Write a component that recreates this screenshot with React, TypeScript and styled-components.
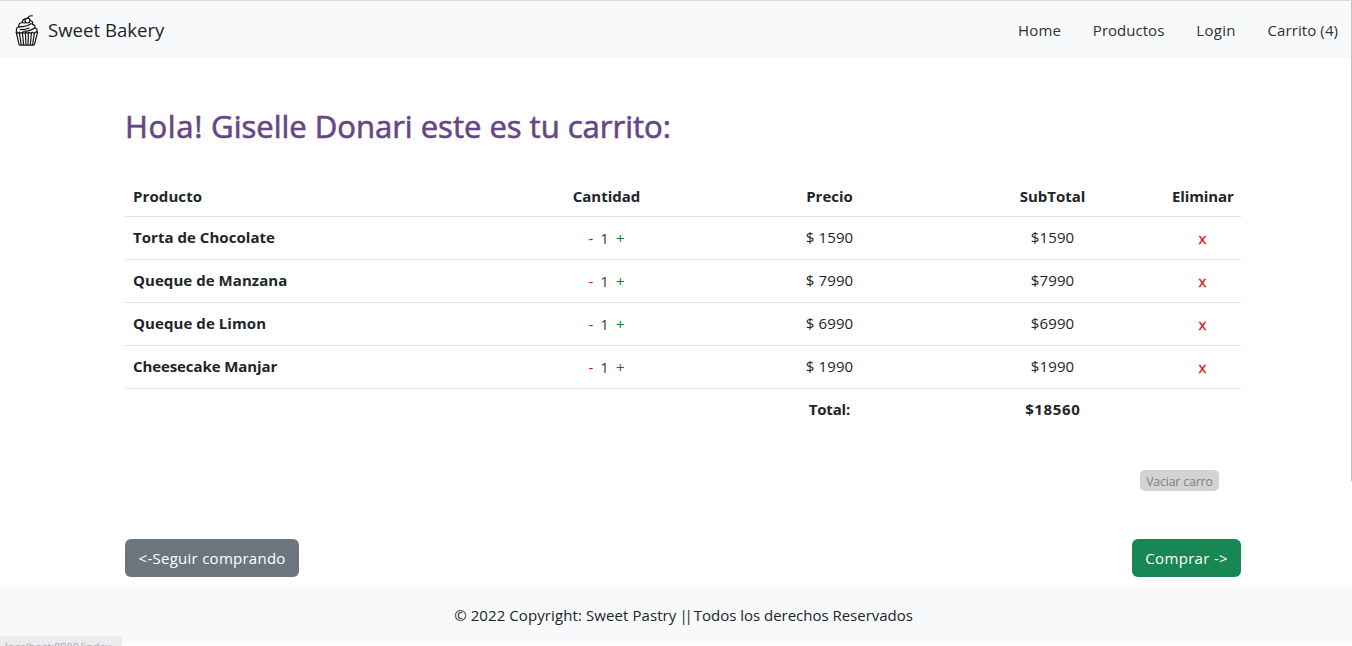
import React from 'react';
import styled, { createGlobalStyle } from 'styled-components';

const GlobalStyle = createGlobalStyle`
  *, *::before, *::after { box-sizing: border-box; }
  html, body { margin: 0; height: 100%; overflow: hidden; }
  body {
    background: #fff;
    color: #212529;
    font-family: 'Segoe UI', 'Open Sans', 'Noto Sans', sans-serif;
    font-size: 15px;
    line-height: 24px;
  }
`;

const Page = styled.div`
  position: relative;
  height: 646px;
  overflow: hidden;
  border-top: 1px solid #d9dadc;
`;

const Text = styled.span<{ $track?: number }>`
  display: inline-block;
  white-space: pre;
  letter-spacing: ${({ $track = 0 }) => $track}px;
  margin-right: ${({ $track = 0 }) => -$track}px;
`;

const Navbar = styled.nav`
  display: flex;
  align-items: center;
  justify-content: space-between;
  height: 57px;
  padding: 0 14px 0 15px;
  background: #f8f9fa;
`;

const Brand = styled.a`
  display: flex;
  align-items: center;
  gap: 9px;
  font-size: 18.6px;
  line-height: 30px;
`;

const NavLinks = styled.div`
  display: flex;
  gap: 32px;
`;

const NavLink = styled.a`
  color: #303235;
`;

const Container = styled.main`
  display: flex;
  flex-direction: column;
  width: 1116px;
  height: 529px;
  margin-left: 125px;
`;

const Heading = styled.h1`
  margin: 48px 0 0;
  font-size: 31.1px;
  font-weight: 500;
  line-height: 40px;
  color: #664783;
  -webkit-text-stroke: 0.6px #664783;
`;

const Table = styled.div`
  margin-top: 30px;
`;

const Row = styled.div<{ $height: number; $line?: boolean }>`
  display: grid;
  grid-template-columns: 370px 223px 223px 223px 77px;
  height: ${({ $height }) => $height}px;
  padding-top: 8px;
  border-bottom: ${({ $line }) => ($line ? '1px solid #dee2e6' : '0')};
`;

const Cell = styled.div<{ $bold?: boolean; $left?: boolean }>`
  padding: 0 8px;
  font-weight: ${({ $bold }) => ($bold ? 700 : 400)};
  text-align: ${({ $left }) => ($left ? 'left' : 'center')};
`;

const Quantity = styled.div`
  display: flex;
  justify-content: center;
  gap: 7px;
  padding-top: 1px;
  color: #3c4043;
`;

const Action = styled.span<{ $color: string }>`
  color: ${({ $color }) => $color};
`;

const Remove = styled.div`
  padding-top: 1px;
  text-align: center;
  color: #dc1014;
  -webkit-text-stroke: 0.3px #dc1014;
`;

const EmptyButton = styled.button`
  align-self: flex-end;
  width: 79px;
  height: 21px;
  margin: 40px 22px 0 0;
  padding: 2px 0 0;
  border: 0;
  border-radius: 5px;
  background: #d3d3d3;
  color: #808080;
  font: 12.3px/19px 'Segoe UI', 'Open Sans', sans-serif;
`;

const Actions = styled.div`
  display: flex;
  justify-content: space-between;
  margin-top: 48px;
`;

const Button = styled.button<{ $color: string; $width: number }>`
  width: ${({ $width }) => $width}px;
  height: 38px;
  padding: 0 0 1px;
  border: 0;
  border-radius: 6px;
  background: ${({ $color }) => $color};
  color: #fff;
  font: inherit;
`;

const Footer = styled.footer`
  display: flex;
  justify-content: center;
  height: 56px;
  padding: 16px 0 0 15px;
  background: #f8f9fb;
`;

const Separator = styled.span`
  margin: 0 1px 0 3px;
  letter-spacing: -3px;
  padding-right: 3px;
`;

const StatusBubble = styled.div`
  position: absolute;
  left: 0;
  bottom: -10px;
  width: 122px;
  height: 20px;
  padding-left: 5px;
  overflow: hidden;
  border-radius: 0 4px 0 0;
  background: #ebecee;
  color: #a9abae;
  font-size: 11px;
  line-height: 22px;
`;

const WindowEdge = styled.div`
  position: absolute;
  top: 0;
  right: 0;
  width: 1px;
  height: 480px;
  background: #c4c4c4;
`;

const CupcakeIcon = styled.svg`
  width: 24px;
  height: 31px;
  margin-top: 2px;
`;

const Cupcake = () => (
  <CupcakeIcon viewBox="0 0 24 32" preserveAspectRatio="none" fill="none" stroke="#111" strokeWidth="1.15" strokeLinecap="round" strokeLinejoin="round">
    <path d="M1.2 17.7 4 30.2Q4.2 31.1 5.2 31.1H18.3Q19.3 31.1 19.5 30.2L22.6 17.7" />
    <path d="M1.2 17.7 2.8 19 4.4 17.6 6 19 7.6 17.6 9.2 19 10.8 17.6 12.4 19 14 17.6 15.6 19 17.2 17.6 18.8 19 20.7 17.6 22.6 17.7" />
    <path d="M4.4 18.5 6.2 30.5M7.4 18.5 8.6 30.5M10.5 18.5 10.9 30.5M13.4 18.5 13 30.5M16.4 18.5 15.4 30.5M19.4 18.5 17.6 30.5" />
    <path d="M2 17.3C.6 15.3 1.4 12.7 4 12.3 3.1 9.6 4.7 8 7 7.7 7.2 6 8.2 4.7 9.9 4" />
    <path d="M4 12.3C9.3 12.2 13.1 11.2 16.2 8.8M7 7.7C8.4 8.2 10 8.2 11.3 7.7M15.1 5.4C17.7 6.5 18.1 8 17.3 9.7 20.2 10.1 20.6 12.2 19.6 13.4 22.1 13.8 22.7 15.5 21.7 17.2M19.6 13.4C16.4 15.8 12.7 16.7 8.3 16.8M5.2 15.1C8.8 15.2 11.4 14.7 14 13.4" />
    <circle cx="12.5" cy="5.7" r="2.5" />
    <path d="M13 3.4C13.4 1.5 15.2.6 17.3.9" />
  </CupcakeIcon>
);

const products = [
  { name: 'Torta de Chocolate', price: 1590, track: 0.04 },
  { name: 'Queque de Manzana', price: 7990, track: 0.06 },
  { name: 'Queque de Limon', price: 6990, track: 0.08 },
  { name: 'Cheesecake Manjar', price: 1990, track: -0.1 },
];

const headers = [
  { label: 'Producto', track: 0.1 },
  { label: 'Cantidad', track: 0 },
  { label: 'Precio', track: 0 },
  { label: 'SubTotal', track: 0 },
  { label: 'Eliminar', track: -0.12 },
];

const links = [
  { label: 'Home', track: 0.15 },
  { label: 'Productos', track: 0.02 },
  { label: 'Login', track: 0.3 },
  { label: 'Carrito (4)', track: 0.1 },
];

export default function App() {
  return (
    <Page>
      <GlobalStyle />
      <Navbar>
        <Brand>
          <Cupcake />
          <Text>Sweet Bakery</Text>
        </Brand>
        <NavLinks>
          {links.map((l) => (
            <NavLink key={l.label}>
              <Text $track={l.track}>{l.label}</Text>
            </NavLink>
          ))}
        </NavLinks>
      </Navbar>
      <Container>
        <Heading>
          <Text $track={0.6}>Hola! </Text>
          <Text $track={-0.04}>Giselle Donari este es tu carrito:</Text>
        </Heading>
        <Table>
          <Row $height={41} $line>
            {headers.map((h, i) => (
              <Cell key={h.label} $bold $left={i === 0}>
                <Text $track={h.track}>{h.label}</Text>
              </Cell>
            ))}
          </Row>
          {products.map((p) => (
            <Row key={p.name} $height={43} $line>
              <Cell $bold $left>
                <Text $track={p.track}>{p.name}</Text>
              </Cell>
              <Quantity>
                <Action $color="#dc1014">-</Action>
                <span>1</span>
                <Action $color="#0a8012">+</Action>
              </Quantity>
              <Cell>
                <Text $track={0.1}>$ {p.price}</Text>
              </Cell>
              <Cell>
                <Text $track={0.1}>${p.price}</Text>
              </Cell>
              <Remove>x</Remove>
            </Row>
          ))}
          <Row $height={41}>
            <span />
            <span />
            <Cell $bold>
              <Text $track={-0.15}>Total:</Text>
            </Cell>
            <Cell $bold>
              <Text $track={0.65}>$18560</Text>
            </Cell>
          </Row>
        </Table>
        <EmptyButton>
          <Text $track={-0.15}>Vaciar carro</Text>
        </EmptyButton>
        <Actions>
          <Button $color="#6c757d" $width={174}>
            <Text $track={0.26}>{'<-Seguir comprando'}</Text>
          </Button>
          <Button $color="#198754" $width={109}>
            <Text $track={0.33}>{'Comprar ->'}</Text>
          </Button>
        </Actions>
      </Container>
      <Footer>
        <Text $track={0.09}>© 2022 Copyright: Sweet Pastry</Text>
        <Separator>||</Separator>
        <Text $track={-0.02}>Todos los derechos Reservados</Text>
      </Footer>
      <StatusBubble>localhost:8080/index</StatusBubble>
      <WindowEdge />
    </Page>
  );
}
